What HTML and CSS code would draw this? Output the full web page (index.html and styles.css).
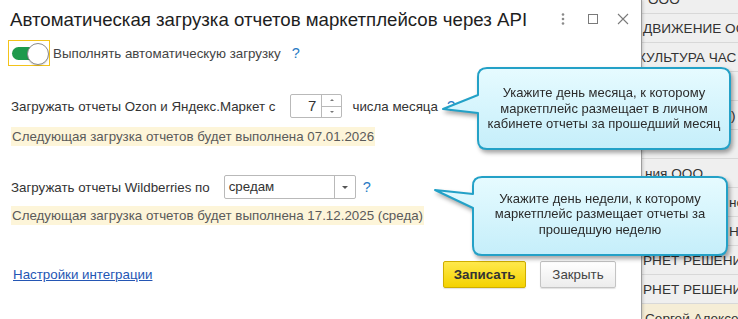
FILE: index.html
```html
<!DOCTYPE html>
<html lang="ru">
<head>
<meta charset="utf-8">
<link rel="stylesheet" href="styles.css">
</head>
<body>
<div class="app">
  <div class="list">
    <div class="row r-top"><span class="cell c0">ООО</span></div>
    <div class="row"><span class="cell c1">ДВИЖЕНИЕ ОСНОВНЫХ</span></div>
    <div class="row"><span class="cell c2">КУЛЬТУРА ЧАС</span></div>
    <div class="row"><span class="cell"></span></div>
    <div class="row"><span class="cell c4">)</span></div>
    <div class="row"><span class="cell"></span></div>
    <div class="row"><span class="cell c6">ния ООО</span></div>
    <div class="row"><span class="cell c7">нс</span></div>
    <div class="row"><span class="cell c7">НИЯ</span></div>
    <div class="row"><span class="cell c1">РНЕТ РЕШЕНИЯ</span></div>
    <div class="row"><span class="cell c1">РНЕТ РЕШЕНИЯ</span></div>
    <div class="row sel"><span class="cell c6">Сергей Алексеевич</span></div>
  </div>
</div>

<div class="dialog">
  <div class="titlebar">
    <div class="title">Автоматическая загрузка отчетов маркетплейсов через API</div>
    <div class="tb-icons">
      <svg class="tb-icon" width="12" height="14" viewBox="0 0 12 14"><circle cx="6" cy="2.5" r="1.3" fill="#8a8a8a"/><circle cx="6" cy="7" r="1.3" fill="#8a8a8a"/><circle cx="6" cy="11.5" r="1.3" fill="#8a8a8a"/></svg>
      <svg class="tb-icon" width="12" height="12" viewBox="0 0 12 12"><rect x="1.5" y="1.5" width="9" height="9" fill="none" stroke="#7a7a7a" stroke-width="1"/></svg>
      <svg class="tb-icon" width="12" height="12" viewBox="0 0 12 12"><path d="M1 1 L11 11 M11 1 L1 11" stroke="#7a7a7a" stroke-width="1.1"/></svg>
    </div>
  </div>

  <div class="content">
    <div class="toggle-row">
      <div class="focus-box">
        <div class="switch"><div class="track"></div><div class="knob"></div></div>
      </div>
      <span class="toggle-label">Выполнять автоматическую загрузку</span>
      <span class="help">?</span>
    </div>

    <div class="field-row row1">
      <span class="label">Загружать отчеты Ozon и Яндекс.Маркет с</span>
      <div class="spinner">
        <span class="spin-value">7</span>
        <div class="spin-btns">
          <span class="spin-btn"><i class="tri-up"></i></span>
          <span class="spin-btn"><i class="tri-down"></i></span>
        </div>
      </div>
      <span class="label after">числа месяца</span>
      <span class="help">?</span>
    </div>
    <div class="info info1">Следующая загрузка отчетов будет выполнена 07.01.2026</div>

    <div class="field-row row2">
      <span class="label">Загружать отчеты Wildberries по</span>
      <div class="select">
        <span class="select-value">средам</span>
        <span class="select-btn"><i class="tri-down big"></i></span>
      </div>
      <span class="help">?</span>
    </div>
    <div class="info info2">Следующая загрузка отчетов будет выполнена 17.12.2025 (среда)</div>

    <div class="footer">
      <a class="link" href="#">Настройки интеграции</a>
      <div class="buttons">
        <button class="btn primary">Записать</button>
        <button class="btn">Закрыть</button>
      </div>
    </div>
  </div>
</div>

<div class="tip tip1">
  <svg class="tip-shape" width="300" height="100" viewBox="0 0 300 100">
    <defs>
      <linearGradient id="g1" x1="0" y1="0" x2="0" y2="1">
        <stop offset="0" stop-color="#e6fbff"/>
        <stop offset="1" stop-color="#c5eefa"/>
      </linearGradient>
    </defs>
    <path d="M51 6 H285 Q294 6 294 15 V78 Q294 87 285 87 H51 Q42 87 42 78 V51 L7 47 L42 33 V15 Q42 6 51 6 Z" fill="url(#g1)" stroke="#23a1c7" stroke-width="2" stroke-linejoin="round"/>
  </svg>
  <div class="tip-text t1">Укажите день месяца, к которому<br>маркетплейс размещает в личном<br>кабинете отчеты за прошедший месяц</div>
</div>

<div class="tip tip2">
  <svg class="tip-shape" width="300" height="100" viewBox="0 0 300 100">
    <defs>
      <linearGradient id="g2" x1="0" y1="0" x2="0" y2="1">
        <stop offset="0" stop-color="#e6fbff"/>
        <stop offset="1" stop-color="#c5eefa"/>
      </linearGradient>
    </defs>
    <path d="M52 7 H288 Q297 7 297 16 V76 Q297 85 288 85 H52 Q43 85 43 76 V38 L5 20 L43 24 V16 Q43 7 52 7 Z" fill="url(#g2)" stroke="#23a1c7" stroke-width="2" stroke-linejoin="round"/>
  </svg>
  <div class="tip-text t2">Укажите день недели, к которому<br>маркетплейс размещает отчеты за<br>прошедшую неделю</div>
</div>
</body>
</html>
```
FILE: styles.css
```css
html, body {
  margin: 0;
  padding: 0;
}
body {
  width: 738px;
  height: 319px;
  overflow: hidden;
  position: relative;
  font-family: "Liberation Sans", Arial, sans-serif;
  background: #efefef;
}

/* background application list */
.app {
  width: 738px;
  height: 319px;
  overflow: hidden;
}
.list {
  display: flex;
  flex-direction: column;
  margin-top: -15px;
}
.row {
  height: 28px;
  border-bottom: 1px solid #d8d8d8;
  background: #efefef;
  display: flex;
  align-items: center;
  font-size: 13.6px;
  color: #333;
  white-space: nowrap;
}
.row.sel {
  background: #f5edd6;
}
.cell { display: block; }
.c0 { padding-left: 648px; }
.c1 { padding-left: 643px; }
.c2 { padding-left: 638px; }
.c4 { padding-left: 731px; }
.c6 { padding-left: 645px; }
.c7 { padding-left: 729px; }

/* dialog window */
.dialog {
  position: absolute;
  left: 0;
  top: 0;
  width: 641px;
  height: 319px;
  background: #fff;
  border-right: 1px solid #9d9d9d;
  box-shadow: 1px 0 3px rgba(0,0,0,0.18);
  display: flex;
  flex-direction: column;
}
.titlebar {
  height: 38px;
  display: flex;
  align-items: center;
  padding-left: 10px;
  padding-right: 12px;
}
.title {
  flex: 1;
  font-size: 18.67px;
  color: #1e1e1e;
  white-space: nowrap;
  padding-top: 1px;
}
.tb-icons {
  display: flex;
  align-items: center;
  gap: 18px;
}
.tb-icon { display: block; }

.content {
  display: flex;
  flex-direction: column;
  flex: 1;
}

.toggle-row {
  display: flex;
  align-items: center;
  padding-left: 8px;
  margin-top: 2px;
  height: 26px;
}
.focus-box {
  border: 1px solid #f3c31a;
  display: flex;
  align-items: center;
  padding-left: 3px;
  box-sizing: border-box;
  width: 42px;
  height: 26px;
}
.switch {
  position: relative;
  width: 36px;
  height: 21px;
  display: flex;
  align-items: center;
}
.track {
  width: 33px;
  height: 13px;
  border-radius: 7px;
  background: #1e9a4c;
}
.knob {
  position: absolute;
  left: 15px;
  top: 0;
  width: 20px;
  height: 20px;
  border-radius: 50%;
  background: #fff;
  border: 1px solid #8a8a8a;
  box-shadow: 0 1px 1px rgba(0,0,0,0.15);
}
.toggle-label {
  font-size: 13.33px;
  color: #444;
  margin-left: 3px;
}
.help {
  font-size: 14.5px;
  color: #2a7bc4;
  margin-left: 11px;
}

.field-row {
  display: flex;
  align-items: center;
  padding-left: 11px;
}
.label {
  font-size: 13.33px;
  color: #333;
}
.row1 {
  margin-top: 28px;
  height: 24px;
}
.spinner {
  margin-left: 15px;
  width: 50px;
  height: 22px;
  border: 1px solid #b9b9b9;
  border-radius: 2px;
  display: flex;
}
.spin-value {
  flex: 1;
  text-align: right;
  font-size: 15px;
  color: #333;
  padding-right: 5px;
  line-height: 22px;
}
.spin-btns {
  width: 19px;
  border-left: 1px solid #b9b9b9;
  display: flex;
  flex-direction: column;
}
.spin-btn {
  flex: 1;
  display: flex;
  align-items: center;
  justify-content: center;
}
.spin-btn + .spin-btn { border-top: 1px solid #b9b9b9; }
.tri-up {
  width: 0; height: 0;
  border-left: 2px solid transparent;
  border-right: 2px solid transparent;
  border-bottom: 2px solid #777;
}
.tri-down {
  width: 0; height: 0;
  border-left: 2px solid transparent;
  border-right: 2px solid transparent;
  border-top: 2px solid #777;
}
.tri-down.big {
  border-left-width: 3px;
  border-right-width: 3px;
  border-top-width: 3px;
  border-top-color: #555;
}
.label.after { margin-left: 10px; }
.row1 .help { margin-left: 9px; }

.info {
  align-self: flex-start;
  margin-left: 11px;
  background: #fdf5d9;
  color: #5a5a5a;
  font-size: 13.33px;
  line-height: 19px;
  padding: 0 1px 0 1px;
}
.info1 { margin-top: 9px; }

.row2 {
  margin-top: 29px;
  height: 24px;
}
.select {
  margin-left: 14px;
  width: 130px;
  height: 22px;
  border: 1px solid #b9b9b9;
  border-radius: 2px;
  display: flex;
}
.select-value {
  flex: 1;
  font-size: 13.33px;
  color: #333;
  line-height: 22px;
  padding-left: 4px;
}
.select-btn {
  width: 20px;
  border-left: 1px solid #b9b9b9;
  display: flex;
  align-items: center;
  justify-content: center;
}
.row2 .help { margin-left: 7px; }
.info2 { margin-top: 7px; }

.footer {
  margin-top: 36px;
  display: flex;
  align-items: center;
  justify-content: space-between;
  padding-left: 13px;
  padding-right: 25px;
}
.link {
  font-size: 13.33px;
  color: #2456b4;
  text-decoration: underline;
}
.buttons {
  display: flex;
  gap: 14px;
}
.btn {
  font-family: "Liberation Sans", Arial, sans-serif;
  font-size: 13.33px;
  height: 27px;
  padding: 0;
  width: 76px;
  border: 1px solid #c4c4c4;
  border-radius: 2px;
  background: linear-gradient(#ffffff, #ececec);
  color: #444;
  box-shadow: 0 1px 1px rgba(0,0,0,0.12);
}
.btn.primary {
  width: 83px;
  font-weight: bold;
  color: #333;
  border-color: #cfae00;
  background: linear-gradient(#ffe94c, #f4d200);
}

/* tooltips */
.tip {
  position: absolute;
  width: 300px;
  height: 100px;
  filter: drop-shadow(2px 3px 2px rgba(0,0,0,0.35));
}
.tip1 { left: 436px; top: 62px; }
.tip2 { left: 430px; top: 170px; }
.tip-shape {
  position: absolute;
  left: 0;
  top: 0;
}
.tip-text {
  position: relative;
  display: flex;
  align-items: center;
  justify-content: center;
  text-align: center;
  font-size: 13px;
  line-height: 15.5px;
  color: #2b2b2b;
}
.t1 {
  margin-left: 42px;
  width: 252px;
  margin-top: 6px;
  height: 81px;
}
.t2 {
  margin-left: 43px;
  width: 254px;
  margin-top: 7px;
  height: 74px;
}
```
